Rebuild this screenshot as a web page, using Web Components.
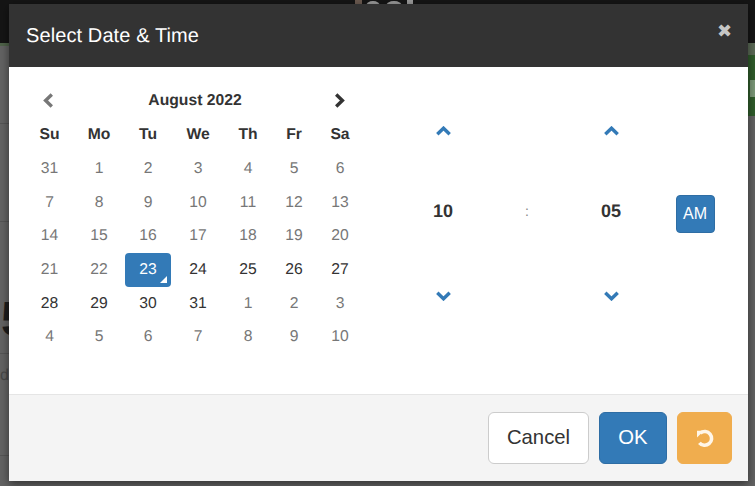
<!DOCTYPE html>
<html><head><meta charset="utf-8"><style>
html,body{margin:0;padding:0;height:486px;overflow:hidden;background:#5e5e5e;font-family:"Liberation Sans",Arial,sans-serif;text-rendering:geometricPrecision}
</style></head><body>
<page-backdrop>
<dt-modal>
<span slot="title">Select Date &amp; Time</span>
<dt-calendar></dt-calendar>
<dt-time slot="time"></dt-time>
</dt-modal>
</page-backdrop>
<script>
const chev = (d,c)=>`<svg width="15" height="10" viewBox="0 0 15 10" aria-hidden="true" style="display:block"><path d="${d==='up'?'M1.3 8.2 7.5 2.2 13.7 8.2':'M1.3 1.8 7.5 7.8 13.7 1.8'}" fill="none" stroke="${c}" stroke-width="3.4"/></svg>`;
const side = (d,c)=>`<svg width="12" height="15" viewBox="0 0 12 15" aria-hidden="true" style="display:block"><path d="${d==='l'?'M9.8 1.5 3.6 7.5 9.8 13.5':'M2.2 1.5 8.4 7.5 2.2 13.5'}" fill="none" stroke="${c}" stroke-width="3.4"/></svg>`;

customElements.define('page-backdrop',class extends HTMLElement{constructor(){super();this.attachShadow({mode:'open'}).innerHTML=`<style>
:host{display:block;position:relative;width:755px;height:486px;overflow:hidden;background:#636363}
.top{position:absolute;left:0;right:0;top:0;height:43px;background:#151515}
.logo{position:absolute;left:354px;top:0;display:block}
.lg{position:absolute;left:0;width:9px;top:43px;height:3px;background:#4f6249}
.rg{position:absolute;right:0;width:7px;top:43px;height:12px;background:#5b6b57}
.green{position:absolute;right:0;width:7px;top:55px;height:61px;background:#2f5c2b}
.pill{position:absolute;left:750px;top:80px;width:5px;height:17px;background:#7b9878}
.line{position:absolute;left:0;width:9px;height:1px;background:#555}
.five{position:absolute;left:1px;top:296px;font:700 48px "Liberation Sans",Arial,sans-serif;color:#1d1d1d;line-height:1}
.d{position:absolute;left:0;top:367px;font:16px "Liberation Sans",Arial,sans-serif;color:#484848}
.wrap{position:relative;padding:4px 0 0 9px}
</style>
<div class="top"></div><div class="lg"></div><div class="rg"></div><div class="green"></div><div class="pill"></div>
<svg class="logo" width="62" height="5" viewBox="0 0 62 5" aria-hidden="true"><g fill="#9a9a9a"><rect x="1" width="7" height="5" fill="#6b5a50"/><ellipse cx="19" cy="6" rx="7" ry="5"/><ellipse cx="40" cy="6" rx="8" ry="5"/><rect x="53" width="6" height="5"/></g></svg>
<span class="five">5</span><span class="d">d</span>
<div class="line" style="top:123px"></div><div class="line" style="top:221px"></div><div class="line" style="top:353px"></div><div class="line" style="top:455px"></div>
<div class="wrap"><slot></slot></div>`}});

customElements.define('dt-modal',class extends HTMLElement{constructor(){super();this.attachShadow({mode:'open'}).innerHTML=`<style>
:host{display:flex;flex-direction:column;width:739px;height:477px;background:#fff;box-shadow:0 3px 9px rgba(0,0,0,.5)}
header{height:63px;flex:none;box-sizing:border-box;background:#333;color:#fff;display:flex;justify-content:space-between;padding:0 16px 0 17px}
h4{margin:0;font-weight:400;font-size:20px;letter-spacing:.1px;line-height:64px}
.x{font-family:"DejaVu Sans",sans-serif;font-size:18px;font-weight:700;color:#c6c6c6;line-height:56px}
main{flex:1;display:flex;min-height:0}
.cal{flex:none;width:392px;padding:16.5px 0 0 17px;box-sizing:border-box}
.t{flex:1;padding-top:41px}
footer{flex:none;height:87px;box-sizing:border-box;background:#f4f4f4;border-top:1px solid #e5e5e5;display:flex;justify-content:flex-end;align-items:flex-start;gap:10px;padding:17px 16px 0 0}
button{font:20.3px/1 "Liberation Sans",Arial,sans-serif;height:52px;border-radius:6px;border:1px solid transparent;padding:0 0 2px;display:flex;align-items:center;justify-content:center;box-sizing:border-box}
.c{width:101px;background:#fff;border-color:#ccc;color:#333}
.o{width:68px;background:#337ab7;border-color:#2e6da4;color:#fff}
.r{width:55px;background:#f0ad4e;border-color:#f0ad4e;color:#fff;padding:0}
</style>
<header><h4><slot name="title"></slot></h4><span class="x">✖</span></header>
<main><div class="cal"><slot></slot></div><div class="t"><slot name="time"></slot></div></main>
<footer><button class="c">Cancel</button><button class="o">OK</button><button class="r" aria-label="Reset"><svg width="20" height="20" viewBox="0 0 20 20"><path d="M5.4 5 A6.9 6.9 0 1 1 4.4 14.8" fill="none" stroke="#fff6e8" stroke-width="3.6"/><path d="M2 2.8 9 2.8 2 9.6Z" fill="#fff6e8"/></svg></button></footer>`}});

customElements.define('dt-calendar',class extends HTMLElement{constructor(){super();
const days=[31,1,2,3,4,5,6,7,8,9,10,11,12,13,14,15,16,17,18,19,20,21,22,23,24,25,26,27,28,29,30,31,1,2,3,4,5,6,7,8,9,10];
const wd=['Su','Mo','Tu','We','Th','Fr','Sa'];
let cells='';
days.forEach((d,i)=>{const cl=i===23?'act':(i<23||i>=32)?'old':'';
 cells+=`<span class="d ${cl}">${d}</span>`});
this.attachShadow({mode:'open'}).innerHTML=`<style>
:host{display:block;width:337px;color:#333;font-size:15.7px}
.g{display:grid;grid-template-columns:47px 52px 46px 54px 46px 46px 46px;grid-template-rows:35px;grid-auto-rows:33.67px}
.n{display:flex;align-items:center;justify-content:center;padding-bottom:2px}
.n.l{padding-right:4px}
.m{grid-column:2/7;font-weight:700;display:flex;align-items:center;justify-content:center}
.w{font-weight:700;display:flex;align-items:center;justify-content:center}
.d{display:flex;align-items:center;justify-content:center;border-radius:4px;position:relative}
.d.old{color:#777}
.d.act{background:#337ab7;color:#fff}
.d.act::after{content:"";position:absolute;right:4px;bottom:4px;border-left:7px solid transparent;border-bottom:7px solid #fff}
</style>
<div class="g"><span class="n l">${side('l','#777')}</span><span class="m">August 2022</span><span class="n">${side('r','#333')}</span>
${wd.map(x=>`<span class="w">${x}</span>`).join('')}${cells}</div>`}});

customElements.define('dt-time',class extends HTMLElement{constructor(){super();
this.attachShadow({mode:'open'}).innerHTML=`<style>
:host{display:block;color:#333}
.g{display:grid;grid-template-columns:repeat(4,84px);grid-template-rows:46px 114px 56px;justify-items:center;align-items:center}
.v{font-weight:700;font-size:18px}
.s{font-size:14px;color:#888}
.am{width:39px;height:38px;margin-top:6px;background:#337ab7;border:1px solid #2e6da4;border-radius:4px;color:#fff;font:16px "Liberation Sans",Arial,sans-serif;padding:0;box-sizing:border-box}
</style>
<div class="g">
<span>${chev('up','#337ab7')}</span><span></span><span>${chev('up','#337ab7')}</span><span></span>
<span class="v">10</span><span class="s">:</span><span class="v">05</span><button class="am">AM</button>
<span>${chev('down','#337ab7')}</span><span></span><span>${chev('down','#337ab7')}</span><span></span>
</div>`}});
</script>
</body></html>
